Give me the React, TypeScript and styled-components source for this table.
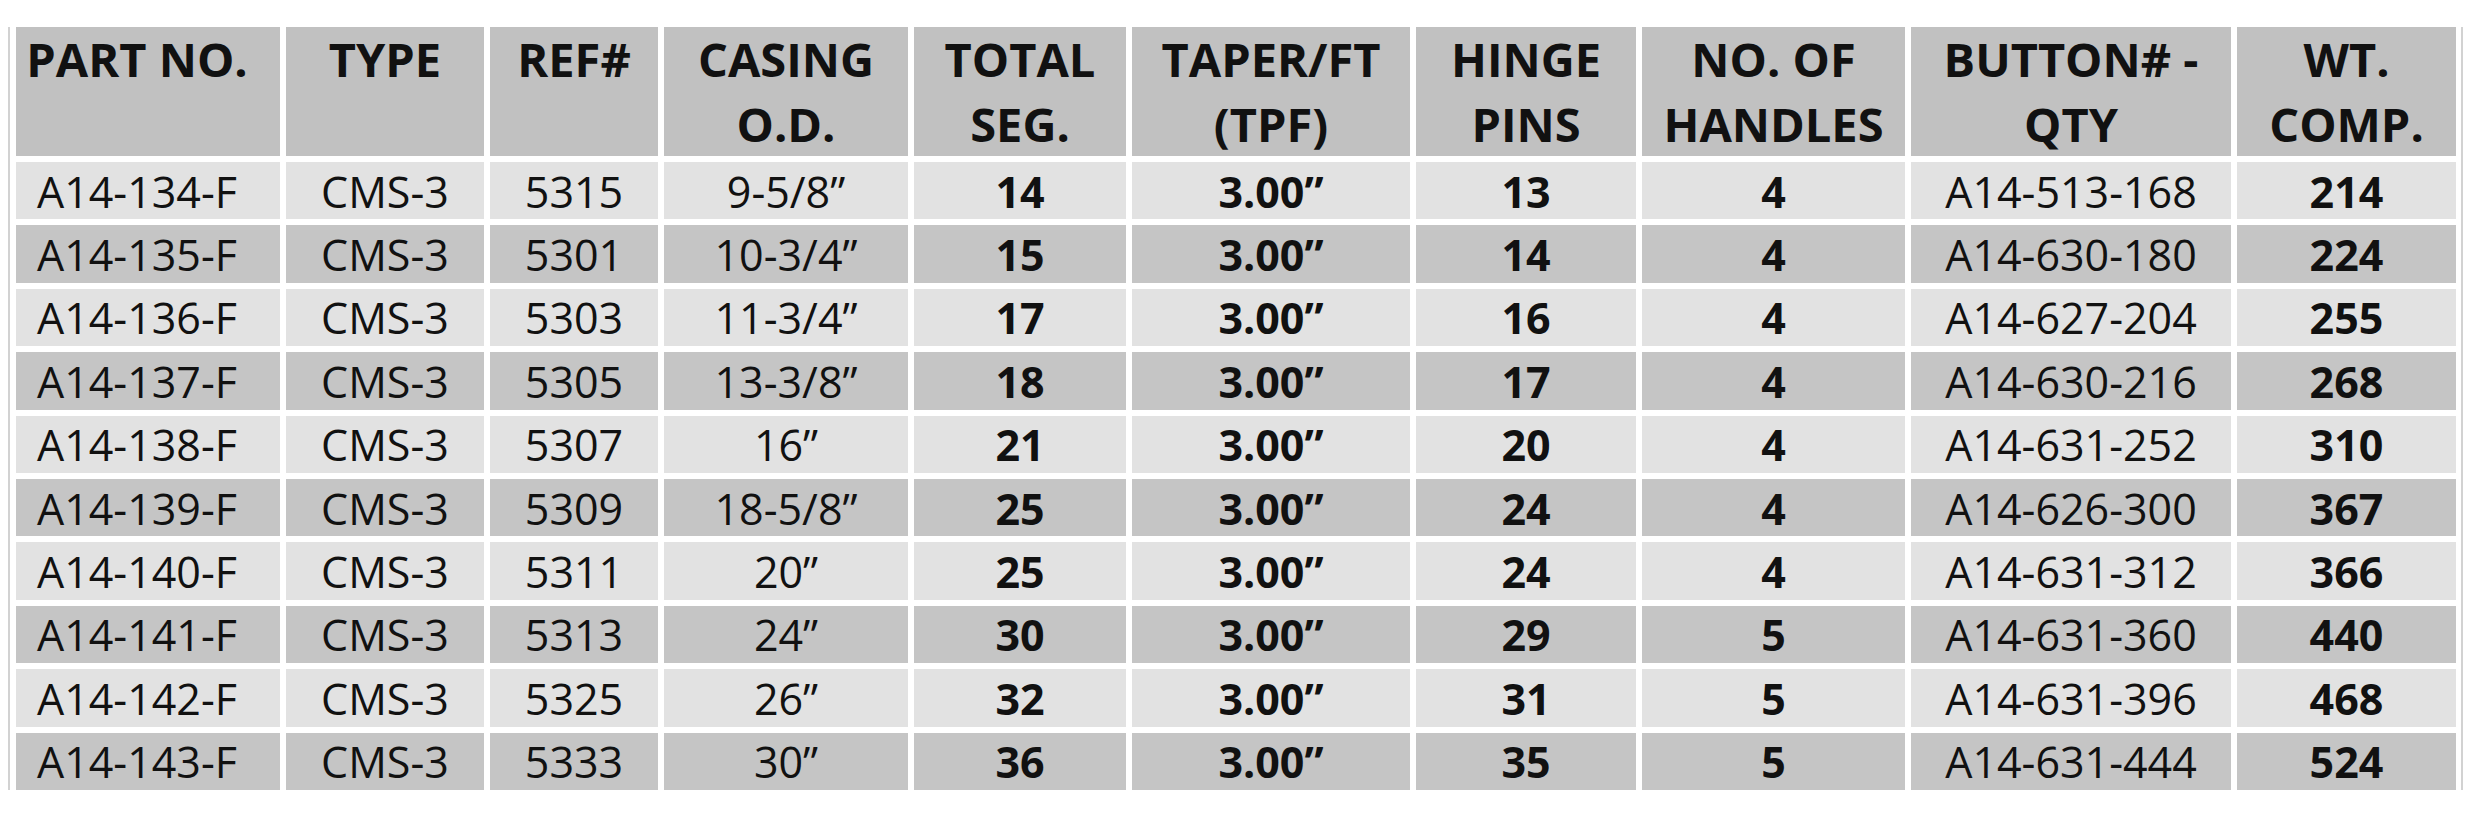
import React from "react";
import styled, { createGlobalStyle } from "styled-components";

const Global = createGlobalStyle`
  html, body { margin: 0; padding: 0; background: #ffffff; }
  body { font-family: "Open Sans", "Liberation Sans", sans-serif; color: #111; }
`;

const COLS = [264, 198, 168, 244, 212, 278, 220, 263, 320, 219];

const Page = styled.div`
  padding: 27px 0 0 8px;
  width: 2480px;
  box-sizing: border-box;
`;

const Frame = styled.div`
  display: inline-block;
  border-left: 2px solid #d2d2d2;
  border-right: 2px solid #d2d2d2;
  padding: 0 5px 0 6px;
`;

const Table = styled.div`
  display: grid;
  grid-template-columns: ${COLS.map((c) => `${c}px`).join(" ")};
  grid-template-rows: 129px repeat(10, 57.4px);
  column-gap: 6px;
  row-gap: 6px;
`;

const Row = styled.div`
  display: contents;
`;

const HeadCell = styled.div<{ $first?: boolean }>`
  background: #c1c1c1;
  font-weight: 700;
  font-size: 47px;
  line-height: 65px;
  font-stretch: 91%;
  text-align: center;
  white-space: nowrap;
  padding-right: ${(p) => (p.$first ? "22px" : "0")};
`;

const Cell = styled.div<{ $bold?: boolean; $dark?: boolean; $first?: boolean }>`
  background: ${(p) => (p.$dark ? "#c5c5c5" : "#e2e2e2")};
  display: flex;
  align-items: center;
  justify-content: center;
  font-size: 43px;
  font-weight: ${(p) => (p.$bold ? 700 : 400)};
  font-stretch: 95%;
  white-space: nowrap;
  padding-right: ${(p) => (p.$first ? "22px" : "0")};
  padding-top: 1px;
`;

const headers: string[][] = [
  ["PART NO."],
  ["TYPE"],
  ["REF#"],
  ["CASING", "O.D."],
  ["TOTAL", "SEG."],
  ["TAPER/FT", "(TPF)"],
  ["HINGE", "PINS"],
  ["NO. OF", "HANDLES"],
  ["BUTTON# -", "QTY"],
  ["WT.", "COMP."],
];

const boldCols = [false, false, false, false, true, true, true, true, false, true];

const rows: string[][] = [
  ["A14-134-F", "CMS-3", "5315", "9-5/8\u201D", "14", "3.00\u201D", "13", "4", "A14-513-168", "214"],
  ["A14-135-F", "CMS-3", "5301", "10-3/4\u201D", "15", "3.00\u201D", "14", "4", "A14-630-180", "224"],
  ["A14-136-F", "CMS-3", "5303", "11-3/4\u201D", "17", "3.00\u201D", "16", "4", "A14-627-204", "255"],
  ["A14-137-F", "CMS-3", "5305", "13-3/8\u201D", "18", "3.00\u201D", "17", "4", "A14-630-216", "268"],
  ["A14-138-F", "CMS-3", "5307", "16\u201D", "21", "3.00\u201D", "20", "4", "A14-631-252", "310"],
  ["A14-139-F", "CMS-3", "5309", "18-5/8\u201D", "25", "3.00\u201D", "24", "4", "A14-626-300", "367"],
  ["A14-140-F", "CMS-3", "5311", "20\u201D", "25", "3.00\u201D", "24", "4", "A14-631-312", "366"],
  ["A14-141-F", "CMS-3", "5313", "24\u201D", "30", "3.00\u201D", "29", "5", "A14-631-360", "440"],
  ["A14-142-F", "CMS-3", "5325", "26\u201D", "32", "3.00\u201D", "31", "5", "A14-631-396", "468"],
  ["A14-143-F", "CMS-3", "5333", "30\u201D", "36", "3.00\u201D", "35", "5", "A14-631-444", "524"],
];

export default function App() {
  return (
    <Page>
      <Global />
      <Frame>
        <Table>
          <Row>
            {headers.map((lines, i) => (
              <HeadCell key={i} $first={i === 0}>
                {lines.map((l, j) => (
                  <div key={j}>{l}</div>
                ))}
              </HeadCell>
            ))}
          </Row>
          {rows.map((r, ri) => (
            <Row key={ri}>
              {r.map((v, ci) => (
                <Cell key={ci} $bold={boldCols[ci]} $dark={ri % 2 === 1} $first={ci === 0}>
                  {v}
                </Cell>
              ))}
            </Row>
          ))}
        </Table>
      </Frame>
    </Page>
  );
}
